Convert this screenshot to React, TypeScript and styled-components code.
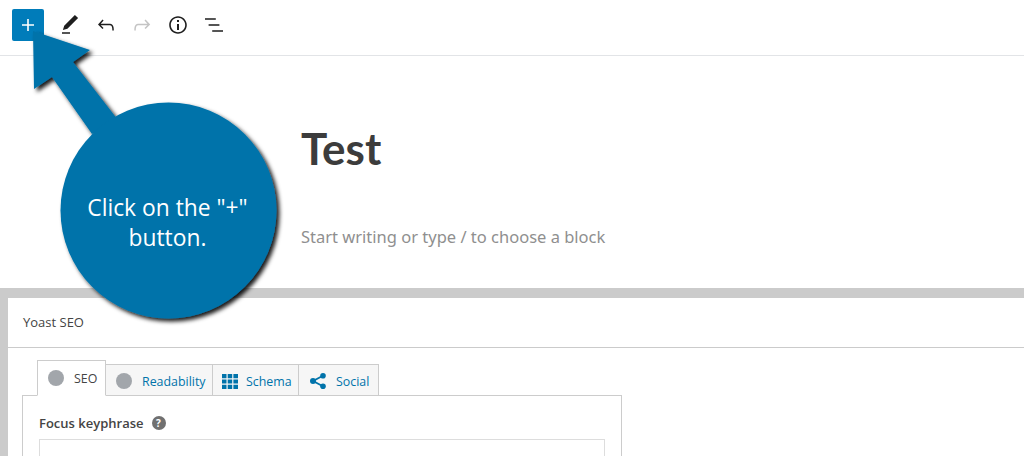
import React from 'react'
import styled, { createGlobalStyle } from 'styled-components'

const GlobalStyle = createGlobalStyle`
  html, body { margin: 0; padding: 0; background: #fff; }
  body { font-family: "Open Sans", sans-serif; overflow: hidden; }
`

const toolIcons = [
  { d: 'M20.1 5.1L16.9 2 6.2 12.7l-1.3 4.4 4.5-1.3L20.1 5.1zM4 20.8h8v-1.5H4v1.5z' },
  { d: 'M18.3 11.7c-.6-.6-1.4-.9-2.3-.9H6.7l2.9-3.3-1.1-1-4.5 5L8.5 16l1-1-2.7-2.7H16c.5 0 .9.2 1.3.5 1 1 1 3.4 1 4.5v.3h1.5v-.2c0-1.5 0-4.3-1.5-5.7z' },
  { d: 'M15.6 6.5l-1.1 1 2.9 3.3H8c-.9 0-1.7.3-2.3.9-1.4 1.5-1.4 4.2-1.4 5.6v.2h1.5v-.3c0-1.1 0-3.5 1-4.5.3-.3.7-.5 1.3-.5h9.2L14.5 15l1.1 1.1 4.6-4.6-4.6-5z', disabled: true },
  { d: 'M12 3.2c-4.8 0-8.8 3.9-8.8 8.8 0 4.8 3.9 8.8 8.8 8.8 4.8 0 8.8-3.9 8.8-8.8 0-4.8-4-8.8-8.8-8.8zm0 16c-4 0-7.2-3.3-7.2-7.2C4.8 8 8 4.8 12 4.8s7.2 3.3 7.2 7.2c0 4-3.2 7.2-7.2 7.2zM11 17h2v-6h-2v6zm0-8h2V7h-2v2z' },
  { d: 'M13.8 5.2H3v1.5h10.8V5.2zm-3.6 12v1.5H21v-1.5H10.2zm7.2-6H6.6v1.5h10.8v-1.5z' },
]

const App = () => {
  return (
    <Page>
      <GlobalStyle />
      <Toolbar>
        <AddButton>
          <svg width="24" height="24" viewBox="0 0 24 24" fill="currentColor">
            <path d="M18 11.2h-5.2V6h-1.6v5.2H6v1.6h5.2V18h1.6v-5.2H18z" />
          </svg>
        </AddButton>
        <ToolGroup>
          {toolIcons.map((icon) => (
            <ToolButton key={icon.d} $disabled={icon.disabled}>
              <svg width="24" height="24" viewBox="0 0 24 24" fill="currentColor">
                <path d={icon.d} />
              </svg>
            </ToolButton>
          ))}
        </ToolGroup>
      </Toolbar>

      <Editor>
        <Title>Test</Title>
        <Placeholder>Start writing or type / to choose a block</Placeholder>
      </Editor>

      <MetaArea>
        <MetaBox>
          <MetaHeader>Yoast SEO</MetaHeader>
          <TabArea>
            <TabRow>
              <Tab $active $width={69}>
                <Dot />
                SEO
              </Tab>
              <Tab $width={107}>
                <Dot />
                Readability
              </Tab>
              <Tab $width={86} $pad={9} $gap={8}>
                <svg width="16" height="15" viewBox="0 0 16 15" fill="#0073aa">
                  <path d="M0 0h4.500v4.200H0zM5.700 0h4.500v4.200H5.700zM11.400 0H16v4.200h-4.600zM0 5.400h4.500v4.200H0zM5.700 5.400h4.500v4.200H5.700zM11.400 5.400H16v4.200h-4.600zM0 10.800h4.500V15H0zM5.700 10.800h4.500V15H5.700zM11.400 10.800H16V15h-4.600z" />
                </svg>
                Schema
              </Tab>
              <Tab $width={80} $pad={11}>
                <svg width="16" height="16" viewBox="0 0 16 16" fill="#0073aa">
                  <circle cx="3" cy="8" r="3" />
                  <circle cx="13" cy="2.800" r="2.800" />
                  <circle cx="13" cy="13.200" r="2.800" />
                  <path d="M3 7l9.500-5 .8 1.500L4 8.500zM3 9l9.500 5 .8-1.500L4 7.500z" />
                </svg>
                Social
              </Tab>
            </TabRow>
            <TabPanel>
              <FieldLabel>
                Focus keyphrase
                <HelpIcon>?</HelpIcon>
              </FieldLabel>
              <KeyphraseInput />
            </TabPanel>
          </TabArea>
        </MetaBox>
      </MetaArea>

      <CalloutArrow viewBox="0 0 300 330" width="300" height="330">
        <defs>
          <filter id="callout-shadow" x="-10%" y="-10%" width="125%" height="125%">
            <feDropShadow dx="3" dy="3" stdDeviation="2" floodColor="#000" floodOpacity="0.9" />
          </filter>
        </defs>
        <g filter="url(#callout-shadow)" fill="#0073aa">
          <path d="M33 31L90 50L73 62L118 120L92 134L52 77L34 89Z" />
          <circle cx="168.500" cy="210.500" r="108" />
        </g>
      </CalloutArrow>
      <CalloutText>
        Click on the "+"
        <br />
        button.
      </CalloutText>
    </Page>
  )
}

const Page = styled.div`
  position: relative;
  width: 1024px;
  height: 456px;
  overflow: hidden;
  background: #fff;
`

const Toolbar = styled.div`
  display: flex;
  align-items: center;
  box-sizing: border-box;
  height: 56px;
  padding: 0 0 5px 12px;
  border-bottom: 1px solid #e2e4e7;
`

const AddButton = styled.div`
  display: flex;
  align-items: center;
  justify-content: center;
  width: 32px;
  height: 32px;
  border-radius: 2px;
  background: #007cba;
  color: #fff;
`

const ToolGroup = styled.div`
  display: flex;
  margin-left: 8px;
`

const ToolButton = styled.div<{ $disabled?: boolean }>`
  display: flex;
  align-items: center;
  justify-content: center;
  width: 36px;
  height: 36px;
  color: ${(p) => (p.$disabled ? '#c4c4c4' : '#1e1e1e')};
`

const Editor = styled.div`
  height: 232px;
  padding-left: 301px;
  box-sizing: border-box;
`

const Title = styled.h1`
  margin: 0;
  padding-top: 67px;
  font-family: Lato, sans-serif;
  font-size: 44px;
  line-height: 50px;
  font-weight: 700;
  color: #3c3c3c;
`

const Placeholder = styled.p`
  margin: 52px 0 0;
  font-family: "Noto Sans", sans-serif;
  font-size: 16.500px;
  line-height: 24px;
  color: #8f8f8f;
`

const MetaArea = styled.div`
  background: #cbcbcb;
  padding: 10px 0 0 8px;
  height: 168px;
  box-sizing: border-box;
`

const MetaBox = styled.div`
  background: #fff;
  height: 100%;
`

const MetaHeader = styled.div`
  height: 50px;
  padding: 0 0 2px 15px;
  display: flex;
  align-items: center;
  box-sizing: border-box;
  border-bottom: 1px solid #cbcbcb;
  font-size: 13px;
  font-weight: 400;
  color: #444;
`

const TabArea = styled.div`
  padding: 12px 0 0 14px;
  width: 600px;
`

const TabRow = styled.div`
  display: flex;
  align-items: flex-end;
  padding-left: 15px;
  margin-bottom: -1px;
  position: relative;
`

const Tab = styled.div<{ $active?: boolean; $gap?: number; $width: number; $pad?: number }>`
  display: flex;
  align-items: center;
  gap: ${(p) => p.$gap ?? 10}px;
  box-sizing: border-box;
  width: ${(p) => p.$width}px;
  height: ${(p) => (p.$active ? '36px' : '32px')};
  padding: ${(p) => (p.$active ? '0' : '2px')} 0 0 ${(p) => p.$pad ?? 10}px;
  border: 1px solid #ccc;
  border-left-width: ${(p) => (p.$active ? '1px' : '0')};
  border-bottom-color: ${(p) => (p.$active ? '#fff' : '#ccc')};
  background: ${(p) => (p.$active ? '#fff' : '#f6f6f6')};
  color: ${(p) => (p.$active ? '#444' : '#0073aa')};
  font-size: 12.400px;
`

const Dot = styled.span`
  width: 16px;
  height: 16px;
  border-radius: 50%;
  background: #a2a6ab;
`

const TabPanel = styled.div`
  border: 1px solid #ccc;
  border-bottom: 0;
  padding: 16px 16px 0;
  height: 60px;
`

const FieldLabel = styled.div`
  display: flex;
  align-items: center;
  gap: 8px;
  height: 22px;
  font-size: 13px;
  font-weight: 600;
  color: #444;
`

const HelpIcon = styled.span`
  display: flex;
  align-items: center;
  justify-content: center;
  width: 14px;
  height: 14px;
  border-radius: 50%;
  background: #707070;
  color: #fff;
  font-size: 10px;
  font-weight: 700;
`

const KeyphraseInput = styled.div`
  margin-top: 5px;
  height: 40px;
  border: 1px solid #ddd;
`

const CalloutArrow = styled.svg`
  position: absolute;
  left: 0;
  top: 0;
`

const CalloutText = styled.div`
  position: absolute;
  left: 60px;
  top: 193px;
  width: 215px;
  text-align: center;
  font-family: "Open Sans", sans-serif;
  font-size: 22.800px;
  line-height: 30px;
  color: #fff;
`

export default App
